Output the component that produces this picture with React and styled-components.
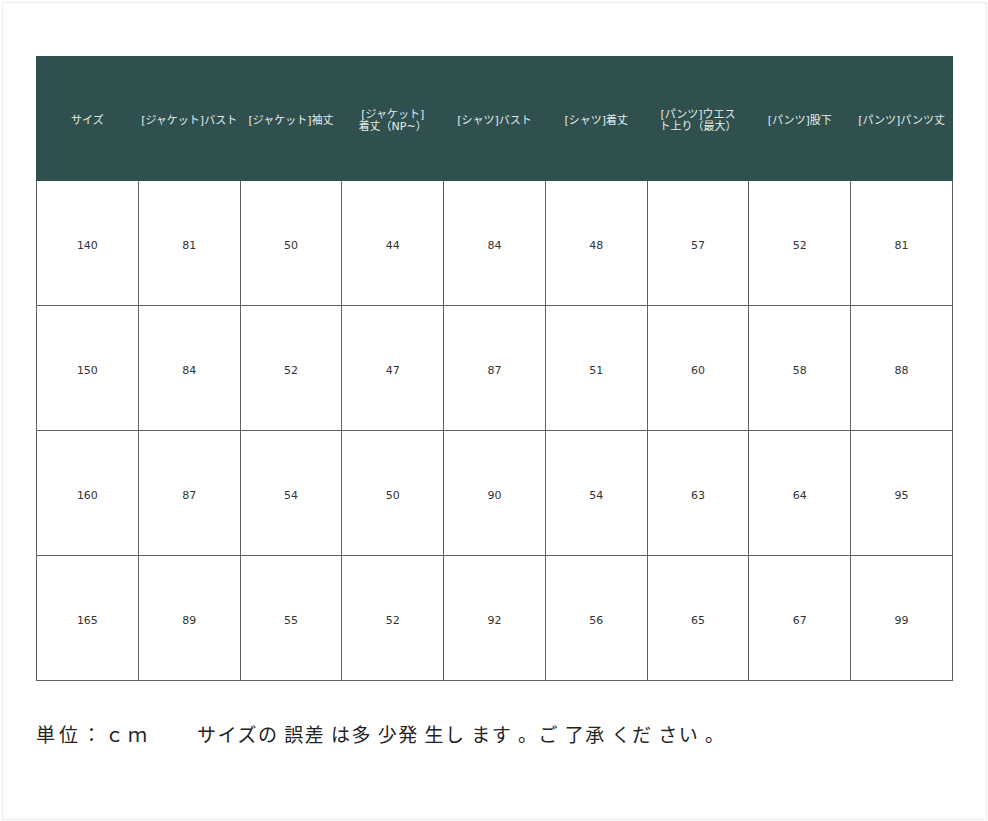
import React from "react";
import styled, { createGlobalStyle, } from "styled-components";

// ------------------------------

const GlobalStyle = createGlobalStyle`
	html, body {
		margin: 0;
		padding: 0;
		background: #ffffff;
	}

	body {
		font-family: "DejaVu Sans", "Noto Sans CJK JP", sans-serif;
	}
`;

const Frame = styled.div`
	box-sizing: border-box;
	width: 985px;
	height: 818px;
	margin: 2px 0 0 2px;
	border: 1px solid #ececec;
	padding: 53px 0 0 33px;
`;

const Table = styled.table`
	width: 917px;
	table-layout: fixed;
	border-collapse: collapse;
`;

const HeadCell = styled.th`
	height: 119px;
	padding: 4px 2px 0;
	background-color: #2f504e;
	color: #e6eeec;
	font-size: 11px;
	font-weight: normal;
	line-height: 12px;
	text-align: center;
	vertical-align: middle;
	border: 1px solid #2f504e;
`;

const Cell = styled.td`
	height: 120px;
	padding: 4px 0 0;
	color: #333333;
	font-size: 11px;
	text-align: center;
	vertical-align: middle;
	border: 1px solid #5c6362;
`;

const Note = styled.p`
	margin: 38px 0 0 0;
	color: #222222;
	font-family: "Noto Sans CJK JP", sans-serif;
	font-size: 19px;
	letter-spacing: 1.5px;
	line-height: 30px;
	white-space: pre;
`;

const Unit = styled.span`
	letter-spacing: 4px;
`;

// ------------------------------

const headers = [
	["サイズ",],
	["[ジャケット]バスト",],
	["[ジャケット]袖丈",],
	["[ジャケット]", "着丈（NP~）",],
	["[シャツ]バスト",],
	["[シャツ]着丈",],
	["[パンツ]ウエス", "ト上り（最大）",],
	["[パンツ]股下",],
	["[パンツ]パンツ丈",],
];

const rows = [
	[140, 81, 50, 44, 84, 48, 57, 52, 81,],
	[150, 84, 52, 47, 87, 51, 60, 58, 88,],
	[160, 87, 54, 50, 90, 54, 63, 64, 95,],
	[165, 89, 55, 52, 92, 56, 65, 67, 99,],
];

// ------------------------------

export default () => (
	<Frame>
		<GlobalStyle />

		<Table>
			<thead>
				<tr>
					{headers.map((lines, i) => (
						<HeadCell key = { i }>
							{lines.map((line, j) => (
								<div key = { j }>{line}</div>
							))}
						</HeadCell>
					))}
				</tr>
			</thead>

			<tbody>
				{rows.map(row => (
					<tr key = { row[0] }>
						{row.map((value, i) => (
							<Cell key = { i }>{value}</Cell>
						))}
					</tr>
				))}
			</tbody>
		</Table>

		<Note>
			<Unit>単位：ｃｍ　　</Unit>
			サイズの 誤差 は多 少発 生し ます 。ご 了承 くだ さい 。
		</Note>
	</Frame>
);
